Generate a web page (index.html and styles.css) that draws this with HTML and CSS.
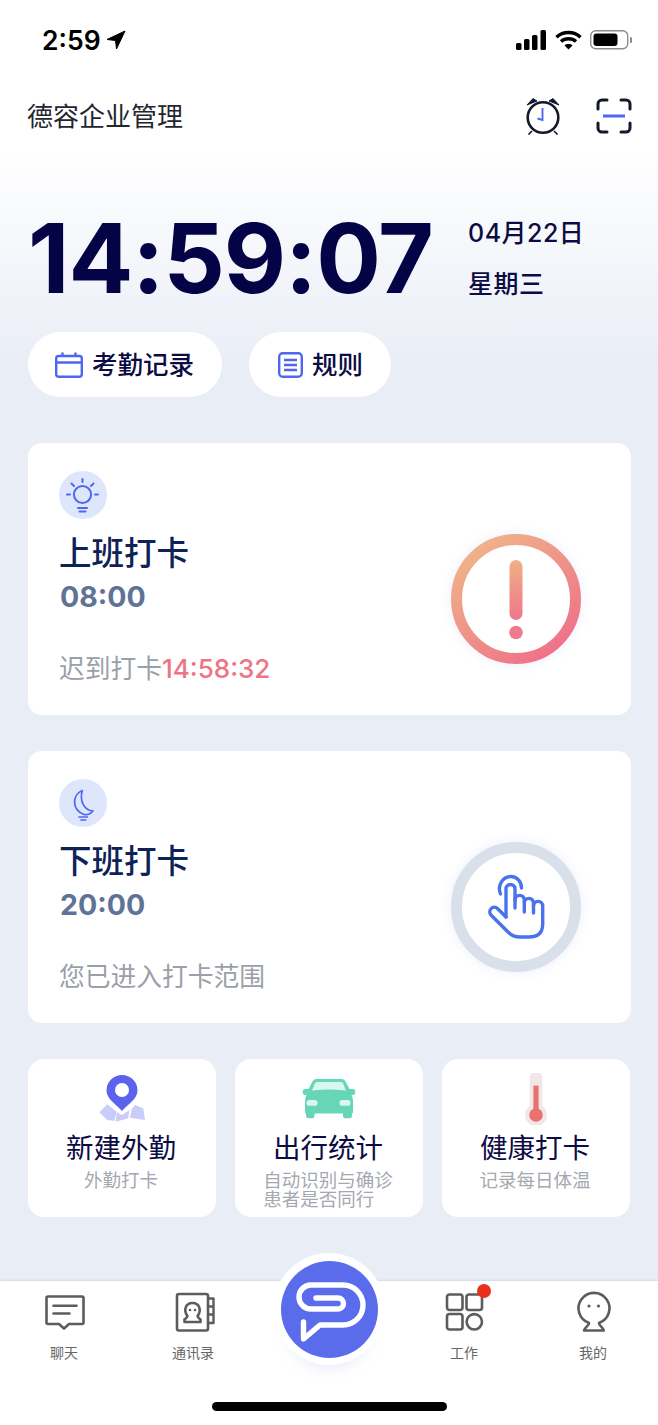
FILE: index.html
```html
<!DOCTYPE html>
<html lang="zh-CN">

<head>
    <meta charset="UTF-8">
    <meta name="viewport" content="width=device-width, initial-scale=1.0">
    <title>德容企业管理</title>
    <link rel="stylesheet" href="styles.css">
</head>

<body>
    <div class="page">
        <div class="main">
            <div class="status-bar">
                <div class="status-time">
                    <span>2:59</span>
                    <svg width="20" height="20" viewBox="0 0 20 20"><path d="M19 1 L1 9.5 L9.5 10.5 L10.5 19 Z" fill="#000" stroke="#000" stroke-linejoin="round"/></svg>
                </div>
                <div class="status-icons">
                    <svg width="31" height="20" viewBox="0 0 31 20" fill="#000">
                        <rect x="0" y="13" width="5.5" height="7" rx="1.5"/>
                        <rect x="8" y="9" width="5.5" height="11" rx="1.5"/>
                        <rect x="16" y="5" width="5.5" height="15" rx="1.5"/>
                        <rect x="24.5" y="0" width="5.5" height="20" rx="1.5"/>
                    </svg>
                    <svg width="27" height="20" viewBox="0 0 27 20" fill="none" stroke="#000" stroke-width="3.4">
                        <path d="M1.5 7.2 C8 1 19 1 25.5 7.2"/>
                        <path d="M6 11.6 C10 7.8 17 7.8 21 11.6"/>
                        <path d="M13.5 19.5 L9.5 15.4 C11.5 13.6 15.5 13.6 17.5 15.4 Z" fill="#000" stroke="none"/>
                    </svg>
                    <svg width="42" height="20" viewBox="0 0 42 20">
                        <rect x="0.7" y="0.7" width="37" height="18" rx="5" fill="none" stroke="#8c8c8c" stroke-width="1.4"/>
                        <rect x="3.5" y="3.5" width="24" height="12.5" rx="3" fill="#000"/>
                        <path d="M40 7 a3 3 0 0 1 0 6 Z" fill="#8c8c8c"/>
                    </svg>
                </div>
            </div>

            <div class="header">
                <div class="app-name">德容企业管理</div>
                <div class="header-icons">
                    <svg width="38" height="38" viewBox="0 0 38 38" fill="none">
                        <circle cx="19" cy="20.5" r="15.3" stroke="#14182b" stroke-width="2.6"/>
                        <path d="M3 8 L9 1.5 L13 4 Z M35 8 L29 1.5 L25 4 Z" fill="#14182b" stroke="#14182b" stroke-linejoin="round"/>
                        <path d="M8 34 L4.5 37.5 M30 34 L33.5 37.5" stroke="#14182b" stroke-width="1.6"/>
                        <path d="M18.5 11 V23 L13.5 21.5" stroke="#4f66f0" stroke-width="1.9"/>
                    </svg>
                    <svg width="36" height="36" viewBox="0 0 36 36" fill="none" stroke="#14182b" stroke-width="3" stroke-linecap="round">
                        <path d="M2 11 V6 a4 4 0 0 1 4 -4 H11"/>
                        <path d="M25 2 H30 a4 4 0 0 1 4 4 V11"/>
                        <path d="M2 25 V30 a4 4 0 0 0 4 4 H11"/>
                        <path d="M25 34 H30 a4 4 0 0 0 4 -4 V25"/>
                        <path d="M7 18 H29" stroke="#4f66f0" stroke-linecap="butt"/>
                    </svg>
                </div>
            </div>

            <div class="clock-row">
                <div class="clock">14:59:07</div>
                <div class="date">
                    <div>04月22日</div>
                    <div>星期三</div>
                </div>
            </div>

            <div class="pills">
                <div class="pill">
                    <svg width="28" height="26" viewBox="0 0 28 26" fill="none" stroke="#4f66f0" stroke-width="2.4">
                        <rect x="1.2" y="4" width="25.6" height="20.8" rx="2.5"/>
                        <path d="M1.2 10.5 H26.8 M7.5 0.5 V5 M20.5 0.5 V5"/>
                    </svg>
                    <span class="pill-text">考勤记录</span>
                </div>
                <div class="pill pill-short">
                    <svg width="25" height="26" viewBox="0 0 25 26" fill="none" stroke="#4f66f0" stroke-width="2.4">
                        <rect x="1.2" y="1.2" width="22.6" height="23.6" rx="3.5"/>
                        <path d="M6 8 H19 M6 13 H19 M6 18 H19"/>
                    </svg>
                    <span class="pill-text">规则</span>
                </div>
            </div>

            <div class="card">
                <div class="card-info">
                    <svg class="card-icon" width="48" height="48" viewBox="0 0 48 48" fill="none" stroke="#4f66f0" stroke-width="2" stroke-linecap="round">
                        <circle cx="24" cy="24" r="24" fill="#dde6fb" stroke="none"/>
                        <circle cx="23.5" cy="23.5" r="8.6"/>
                        <path d="M23.5 8 V11 M12.5 12.5 L15 15 M34.5 12.5 L32 15 M8 23.5 H11 M36 23.5 H39"/>
                        <path d="M19 37 H28 M20.5 40.5 H26.5"/>
                    </svg>
                    <div class="card-title">上班打卡</div>
                    <div class="card-time">08:00</div>
                    <div class="card-status">迟到打卡<span class="late">14:58:32</span></div>
                </div>
                <svg class="ring" width="130" height="130" viewBox="0 0 130 130">
                    <defs>
                        <linearGradient id="warn" x1="0.15" y1="0.05" x2="0.85" y2="0.95">
                            <stop offset="0" stop-color="#f0b388"/>
                            <stop offset="1" stop-color="#ee7189"/>
                        </linearGradient>
                        <linearGradient id="warnBar" x1="0" y1="0" x2="0" y2="1">
                            <stop offset="0" stop-color="#f0b085"/>
                            <stop offset="1" stop-color="#ee768a"/>
                        </linearGradient>
                    </defs>
                    <circle cx="65" cy="65" r="59.5" fill="#fff" stroke="url(#warn)" stroke-width="11"/>
                    <rect x="58.5" y="26" width="13" height="60" rx="6.5" fill="url(#warnBar)"/>
                    <circle cx="65" cy="98.5" r="6.8" fill="#ee7a8b"/>
                </svg>
            </div>

            <div class="card card-next">
                <div class="card-info">
                    <svg class="card-icon" width="48" height="48" viewBox="0 0 48 48" fill="none" stroke="#4f66f0" stroke-width="1.7" stroke-linecap="round" stroke-linejoin="round">
                        <circle cx="24" cy="24" r="24" fill="#dde6fb" stroke="none"/>
                        <path d="M23.3 11.5 C14 15 11.5 30 25 35.5 C28 36 31.5 35 34 32 C26 31.5 20 23 23.3 11.5 Z"/>
                        <path d="M20 38 H28.3 M22 41 H26.7"/>
                    </svg>
                    <div class="card-title">下班打卡</div>
                    <div class="card-time">20:00</div>
                    <div class="card-status">您已进入打卡范围</div>
                </div>
                <svg class="ring" width="130" height="130" viewBox="0 0 130 130">
                    <circle cx="65" cy="65" r="59.5" fill="#fff" stroke="#d9e0e9" stroke-width="11"/>
                    <g fill="none" stroke="#4a72ee" stroke-width="3.4" stroke-linecap="round" stroke-linejoin="round">
                        <path d="M49.5 52 C46 43 52 34.5 60 34.5 C66 34.5 70.5 39.5 70.5 46"/>
                        <path d="M55 75 V47 a4.5 4.5 0 0 1 9 0 V66"/>
                        <path d="M55 75 L46.5 66.5 a4.6 4.6 0 0 0 -6.5 6.5 L57 90 q5 5 12 5 h9 q13.7 0 13.7 -13 V64 a4.6 4.6 0 0 0 -9.2 0 V71"/>
                        <path d="M82.5 64 V61 a4.6 4.6 0 0 0 -9.2 0 V70"/>
                        <path d="M73.3 60 V58 a4.6 4.6 0 0 0 -9.3 0"/>
                    </g>
                </svg>
            </div>

            <div class="tiles">
                <div class="tile">
                    <svg width="52" height="52" viewBox="0 0 52 52">
                        <g fill="#c9cdf9">
                            <path d="M3.3 39.3 L11.3 31.3 L20.7 38.7 L18.3 48 L11.3 47 Z"/>
                            <path d="M20.7 39.3 L26 42 L33.3 37 L32.3 45.3 L19.7 48.7 Z"/>
                            <path d="M39 32 L47.3 35.3 L49 47 L34 44.7 L35.7 36.3 Z"/>
                        </g>
                        <path d="M26 38 C20 31 10.5 26 10.5 17.5 a15.5 15.5 0 0 1 31 0 C41.5 26 32 31 26 38 Z" fill="#5b63ec"/>
                        <circle cx="26" cy="17" r="7" fill="#fff"/>
                    </svg>
                    <div class="tile-title">新建外勤</div>
                    <div class="tile-sub">外勤打卡</div>
                </div>
                <div class="tile">
                    <svg width="56" height="52" viewBox="0 0 56 52">
                        <path d="M15 6 H41 Q43.5 6 44.5 8.5 L48.5 16 H52 Q54.2 16 54.2 18 V20 Q54.2 22 52 22 H50.5 Q52 25 52 28 V39 Q52 40.5 51 40.5 V43 Q51 45.3 48.7 45.3 H44.3 Q42 45.3 42 43 V40.5 H13.5 V43 Q13.5 45.3 11.3 45.3 H7.3 Q5 45.3 5 43 V40.5 Q4 40.5 4 39 V28 Q4 25 5.5 22 H4 Q1.8 22 1.8 20 V18 Q1.8 16 4 16 H7.5 L11.5 8.5 Q12.5 6 15 6 Z" fill="#67d5b8"/>
                        <path d="M16 9 H40 Q41.5 9 42.2 10.5 L45 17.5 Q35 16.5 28 16.5 Q21 16.5 11 17.5 L13.8 10.5 Q14.5 9 16 9 Z" fill="#d8f7ee"/>
                        <rect x="5.5" y="27" width="11" height="5.7" rx="2.8" fill="#d8f7ee"/>
                        <rect x="38.5" y="27" width="11" height="5.7" rx="2.8" fill="#d8f7ee"/>
                    </svg>
                    <div class="tile-title">出行统计</div>
                    <div class="tile-sub tile-sub-tight">自动识别与确诊<br>患者是否同行</div>
                </div>
                <div class="tile">
                    <svg width="52" height="52" viewBox="0 0 52 52">
                        <path d="M19.8 4 a6.2 6.2 0 0 1 12.4 0 V33 a11 11 0 1 1 -12.4 0 Z" fill="#f3e6e6"/>
                        <rect x="23.4" y="12.7" width="5.2" height="26" fill="#e87272"/>
                        <circle cx="26" cy="42" r="6.8" fill="#e87272"/>
                    </svg>
                    <div class="tile-title">健康打卡</div>
                    <div class="tile-sub">记录每日体温</div>
                </div>
            </div>
        </div>

        <div class="tabbar">
            <div class="tabs">
                <div class="tab">
                    <svg width="44" height="44" viewBox="0 0 44 44" fill="none" stroke="#5c5c5c" stroke-width="2.6" stroke-linejoin="round" stroke-linecap="round">
                        <path d="M6 5.5 H40 a1.5 1.5 0 0 1 1.5 1.5 V31.5 a1.5 1.5 0 0 1 -1.5 1.5 H27 L22 37.5 L17 33 H6 a1.5 1.5 0 0 1 -1.5 -1.5 V7 a1.5 1.5 0 0 1 1.5 -1.5 Z"/>
                        <path d="M11.5 14.7 H34.5 M11.5 22.5 H27.5"/>
                    </svg>
                    <div class="tab-label">聊天</div>
                </div>
                <div class="tab">
                    <svg width="44" height="44" viewBox="0 0 44 44" fill="none" stroke="#5c5c5c" stroke-width="2.6" stroke-linejoin="round">
                        <rect x="6" y="3" width="31" height="36.5" rx="2"/>
                        <path d="M37 7.5 H42.5 V32 H37 M37 15.5 H42.5 M37 23.5 H42.5" stroke-width="2.4"/>
                        <path d="M16.5 25 C12.5 20 14 12 21.5 12 C29 12 30.5 20 26.5 25 C27 27 28.5 27.5 29.5 28.5 V31 H13.5 V28.5 C14.5 27.5 16 27 16.5 25 Z"/>
                        <circle cx="19" cy="19" r="1.3" fill="#5c5c5c" stroke="none"/>
                        <circle cx="24" cy="19" r="1.3" fill="#5c5c5c" stroke="none"/>
                    </svg>
                    <div class="tab-label">通讯录</div>
                </div>
                <div class="tab tab-center">
                    <div class="fab">
                        <svg width="97" height="97" viewBox="0 0 97 97" fill="none" stroke="#fff" stroke-width="5.4" stroke-linecap="round" stroke-linejoin="round">
                            <path d="M35 37 H57 a5.5 5.5 0 0 1 0 11 H30 a12 12 0 0 1 0 -24 H62 a20 20 0 0 1 0 40 H39 L22.5 78 V61"/>
                        </svg>
                    </div>
                </div>
                <div class="tab">
                    <div class="tab-icon-wrap">
                        <svg width="44" height="44" viewBox="0 0 44 44" fill="none" stroke="#5c5c5c" stroke-width="2.6">
                            <rect x="5" y="3.5" width="15.5" height="15.5" rx="2.5"/>
                            <rect x="24.5" y="3.5" width="15.5" height="15.5" rx="2.5"/>
                            <rect x="5" y="23" width="15.5" height="15.5" rx="2.5"/>
                            <circle cx="32.3" cy="30.8" r="7.7"/>
                        </svg>
                        <span class="badge"></span>
                    </div>
                    <div class="tab-label">工作</div>
                </div>
                <div class="tab">
                    <svg width="44" height="44" viewBox="0 0 44 44" fill="none" stroke="#5c5c5c" stroke-width="2.6" stroke-linejoin="round">
                        <path d="M18 32 A15.5 15.5 0 1 1 28 32 C28 35 32 36 32.8 39.5 H13 C13.8 36 18 35 18 32 Z"/>
                        <circle cx="18" cy="15" r="1.6" fill="#5c5c5c" stroke="none"/>
                        <circle cx="27.5" cy="15" r="1.6" fill="#5c5c5c" stroke="none"/>
                    </svg>
                    <div class="tab-label">我的</div>
                </div>
            </div>
            <div class="home-bar"></div>
        </div>
    </div>
</body>

</html>
```

FILE: styles.css
```css
* {
    box-sizing: border-box;
}

body {
    margin: 0;
    background: #fff;
    font-family: "Noto Sans CJK SC", "Noto Sans", sans-serif;
}

svg {
    display: block;
}

.page {
    width: 658px;
    height: 1425px;
    overflow: hidden;
}

.main {
    height: 1281px;
    padding: 0 27px 0 28px;
    background: linear-gradient(#fff 0, #fff 150px, #e9edf6 372px);
}

.status-bar {
    height: 80px;
    display: flex;
    justify-content: space-between;
    align-items: center;
    padding-left: 14px;
}

.status-time {
    display: flex;
    align-items: center;
    gap: 5px;
    font-family: Inter, sans-serif;
    font-size: 26.5px;
    font-weight: 600;
    color: #000;
}

.status-icons {
    display: flex;
    align-items: center;
    gap: 8px;
    margin-right: -1px;
}

.header {
    height: 72px;
    display: flex;
    justify-content: space-between;
    align-items: center;
}

.app-name {
    margin-left: -1px;
    padding-bottom: 4px;
    font-size: 26px;
    color: #23262f;
}

.header-icons {
    display: flex;
    align-items: center;
    gap: 34px;
    margin-right: -1px;
}

.clock-row {
    display: flex;
    height: 112px;
    margin-top: 50px;
    margin-bottom: 18px;
}

.clock {
    width: 440px;
    font-family: Inter, sans-serif;
    font-size: 96px;
    font-weight: 700;
    line-height: 112px;
    color: #040346;
    letter-spacing: -1px;
    white-space: nowrap;
}

.date {
    padding-top: 6px;
    font-family: Inter, "Noto Sans CJK SC", sans-serif;
    font-size: 25px;
    font-weight: 500;
    line-height: 51px;
    letter-spacing: 0.5px;
    color: #0c0b44;
}

.pills {
    display: flex;
    gap: 27px;
}

.pill {
    height: 65px;
    width: 194px;
    padding-left: 27px;
    display: flex;
    align-items: center;
    gap: 9px;
    background: #fff;
    border-radius: 33px;
    font-size: 25.5px;
    font-weight: 500;
    color: #0c0b44;
}

.pill-short {
    width: 142px;
    padding-left: 29px;
}

.pill-text {
    padding-bottom: 4px;
}

.card {
    height: 272px;
    margin-top: 46px;
    padding: 28px 50px 0 31px;
    display: flex;
    justify-content: space-between;
    background: #fff;
    border-radius: 14px;
}

.card-next {
    margin-top: 36px;
}

.card-title {
    margin-top: 10px;
    font-size: 32.5px;
    font-weight: 500;
    line-height: 44px;
    color: #0e2258;
}

.card-time {
    margin-top: 2px;
    padding-left: 1px;
    font-family: Inter, sans-serif;
    font-size: 28.5px;
    font-weight: 700;
    line-height: 44px;
    color: #5f7396;
}

.card-status {
    margin-top: 28px;
    font-size: 25.75px;
    line-height: 40px;
    color: #9a9fa8;
}

.late {
    font-family: Inter, sans-serif;
    font-size: 26px;
    font-weight: 500;
    color: #ef7483;
}

.ring {
    margin-top: 63px;
    filter: drop-shadow(0 0 6px rgba(110, 125, 240, 0.12));
}

.tiles {
    display: grid;
    grid-template-columns: repeat(3, 188px);
    gap: 19px;
    margin-top: 36px;
}

.tile {
    height: 158px;
    padding-top: 14px;
    display: flex;
    flex-direction: column;
    align-items: center;
    background: #fff;
    border-radius: 16px;
}

.tile-title {
    margin-top: 2px;
    margin-left: -2px;
    font-size: 27.5px;
    line-height: 38px;
    color: #0c0b44;
}

.tile-sub {
    margin-top: 5px;
    margin-left: -2px;
    font-size: 18.5px;
    line-height: 19px;
    color: #a5a8b0;
    white-space: nowrap;
}

.tile-sub-tight {
    text-align: left;
}

.tabbar {
    height: 144px;
    padding-top: 10px;
    background: #fff;
    box-shadow: 0 -1px 2px rgba(190, 195, 220, 0.5);
    position: relative;
}

.tabs {
    display: grid;
    grid-template-columns: 128px 130px 142px 128px 130px;
    height: 72px;
}

.tab {
    display: flex;
    flex-direction: column;
    align-items: center;
    position: relative;
}

.tab-label {
    margin-top: 7px;
    font-size: 14px;
    line-height: 20px;
    color: #666;
}

.tab-icon-wrap {
    position: relative;
}

.badge {
    position: absolute;
    top: -7px;
    right: -5px;
    width: 14px;
    height: 14px;
    border-radius: 50%;
    background: #e8301f;
}

.fab {
    position: absolute;
    top: -38px;
    left: 15px;
    width: 112px;
    height: 112px;
    padding: 7.5px;
    background: #fff;
    border-radius: 50%;
    box-shadow: 0 18px 14px -14px rgba(200, 205, 245, 0.4);
}

.fab svg {
    background: #5a6ceb;
    border-radius: 50%;
}

.home-bar {
    width: 235px;
    height: 9px;
    margin: 39px auto 0;
    background: #000;
    border-radius: 5px;
}
```
